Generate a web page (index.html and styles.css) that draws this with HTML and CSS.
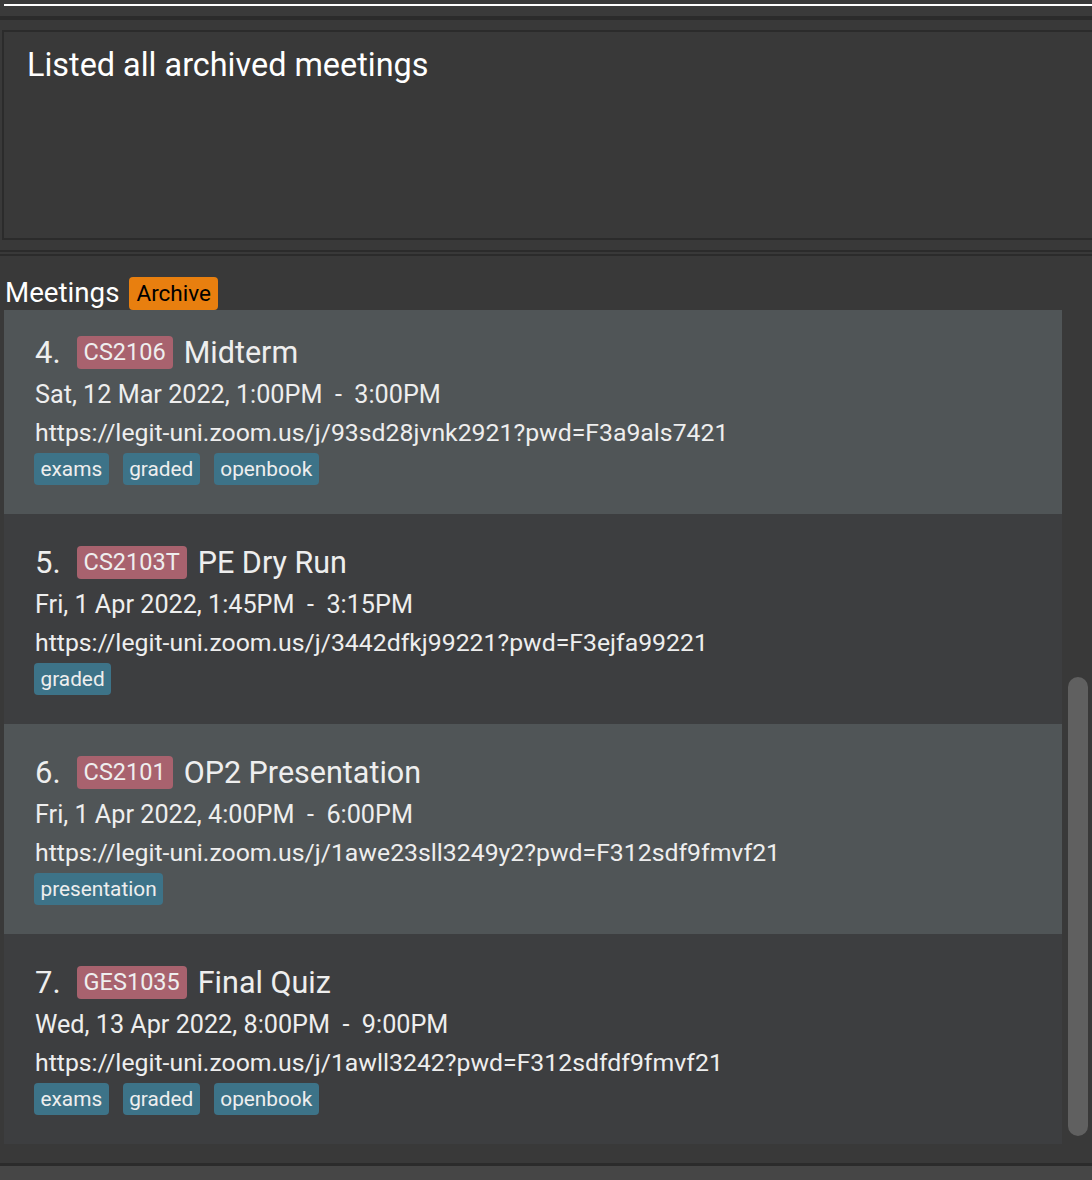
FILE: index.html
```html
<!DOCTYPE html>
<html lang="en">
<head>
<meta charset="utf-8">
<title>Archived meetings</title>
<link rel="stylesheet" href="styles.css">
</head>
<body>
<div class="app">
  <div class="topbar"><div class="topline"></div></div>
  <div class="sep-thick"></div>
  <div class="result-wrap">
    <div class="result-box">Listed all archived meetings</div>
  </div>
  <div class="sep-double"></div>
  <div class="list-header">
    <span class="list-title">Meetings</span>
    <span class="archive-badge">Archive</span>
  </div>
  <div class="list-row">
    <div class="list-viewport">
      <div class="list-inner">
        <div class="card card-light">
          <div class="card-head">
            <span class="num">4.</span>
            <span class="module">CS2106</span>
            <span class="title">Midterm</span>
          </div>
          <div class="line date">Sat, 12 Mar 2022, 1:00PM  -  3:00PM</div>
          <div class="line url">https://legit-uni.zoom.us/j/93sd28jvnk2921?pwd=F3a9als7421</div>
          <div class="tags">
            <span class="tag">exams</span>
            <span class="tag">graded</span>
            <span class="tag">openbook</span>
          </div>
        </div>
        <div class="card card-dark">
          <div class="card-head">
            <span class="num">5.</span>
            <span class="module">CS2103T</span>
            <span class="title">PE Dry Run</span>
          </div>
          <div class="line date">Fri, 1 Apr 2022, 1:45PM  -  3:15PM</div>
          <div class="line url">https://legit-uni.zoom.us/j/3442dfkj99221?pwd=F3ejfa99221</div>
          <div class="tags">
            <span class="tag">graded</span>
          </div>
        </div>
        <div class="card card-light">
          <div class="card-head">
            <span class="num">6.</span>
            <span class="module">CS2101</span>
            <span class="title">OP2 Presentation</span>
          </div>
          <div class="line date">Fri, 1 Apr 2022, 4:00PM  -  6:00PM</div>
          <div class="line url">https://legit-uni.zoom.us/j/1awe23sll3249y2?pwd=F312sdf9fmvf21</div>
          <div class="tags">
            <span class="tag">presentation</span>
          </div>
        </div>
        <div class="card card-dark">
          <div class="card-head">
            <span class="num">7.</span>
            <span class="module">GES1035</span>
            <span class="title">Final Quiz</span>
          </div>
          <div class="line date">Wed, 13 Apr 2022, 8:00PM  -  9:00PM</div>
          <div class="line url">https://legit-uni.zoom.us/j/1awll3242?pwd=F312sdfdf9fmvf21</div>
          <div class="tags">
            <span class="tag">exams</span>
            <span class="tag">graded</span>
            <span class="tag">openbook</span>
          </div>
        </div>
      </div>
    </div>
    <div class="scroll-track"><div class="scroll-thumb"></div></div>
  </div>
  <div class="bottom-gap"></div>
  <div class="sep-bottom"></div>
  <div class="statusbar"></div>
</div>
</body>
</html>
```

FILE: styles.css
```css
* { box-sizing: border-box; }
html, body {
  margin: 0;
  padding: 0;
  background: #393939;
  overflow: hidden;
}
body {
  font-family: Roboto, "Liberation Sans", sans-serif;
  color: #eeeeee;
}
.app {
  width: 1092px;
  height: 1180px;
  display: flex;
  flex-direction: column;
  overflow: hidden;
}
.topbar {
  height: 16px;
  padding-top: 4px;
  padding-left: 4px;
  background: #3a3a3a;
}
.topline {
  height: 2px;
  background: #ffffff;
}
.sep-thick {
  height: 4px;
  background: #2b2b2b;
}
.result-wrap {
  padding: 10px 0 10px 2px;
}
.result-box {
  height: 210px;
  border: 2px solid #2b2b2b;
  border-right: none;
  padding: 14px 0 0 23px;
  font-size: 32.4px;
  line-height: 38px;
  color: #ffffff;
}
.sep-double {
  height: 6px;
  border-top: 2px solid #2b2b2b;
  border-bottom: 2px solid #2b2b2b;
}
.list-header {
  height: 54px;
  padding: 20px 0 0 5px;
  display: flex;
  align-items: center;
  gap: 10px;
}
.list-title {
  font-size: 27.7px;
  line-height: 34px;
  color: #ffffff;
}
.archive-badge {
  background: #e87f0f;
  color: #000000;
  font-size: 22.5px;
  line-height: 33px;
  height: 33px;
  padding: 0 7px;
  border-radius: 4px;
}
.list-row {
  display: flex;
  height: 834px;
}
.list-viewport {
  margin-left: 4px;
  width: 1058px;
  height: 834px;
  overflow: hidden;
}
.list-inner {
  margin-top: -6px;
}
.card {
  height: 210px;
  padding: 31px 0 0 31px;
}
.card-light { background: #505557; }
.card-dark { background: #3d3e40; }
.card-head {
  height: 35px;
  display: flex;
  align-items: center;
}
.num {
  font-size: 31px;
  margin-right: 16px;
}
.module {
  background: #a8626e;
  color: #eeeeee;
  font-size: 23.5px;
  line-height: 33px;
  height: 33px;
  padding: 0 7px;
  border-radius: 4px;
  margin-right: 11px;
}
.title {
  font-size: 30.5px;
}
.line {
  font-size: 24.8px;
  line-height: 28px;
  white-space: pre;
}
.date {
  margin-top: 11px;
  font-size: 25.2px;
}
.url { margin-top: 10px; }
.tags {
  margin-top: 6px;
  margin-left: -1px;
  display: flex;
  gap: 14px;
}
.tag {
  background: #3d7388;
  color: #eeeeee;
  font-size: 20.8px;
  line-height: 32px;
  height: 32px;
  padding: 0 6.5px;
  border-radius: 4px;
}
.scroll-track {
  width: 30px;
  padding-left: 6px;
}
.scroll-thumb {
  margin-top: 367px;
  width: 20px;
  height: 459px;
  border-radius: 10px;
  background: #606060;
}
.bottom-gap {
  height: 19px;
}
.sep-bottom {
  height: 3px;
  background: #2b2b2b;
}
.statusbar {
  flex: 1;
  background: #464646;
}
```
